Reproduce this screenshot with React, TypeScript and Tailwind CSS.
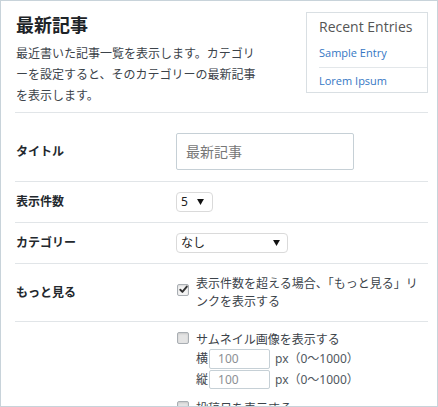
import React from "react";

const FONT = { fontFamily: '"Noto Sans","Noto Sans CJK JP",sans-serif' };

function Check({ checked }: { checked?: boolean }) {
  return (
    <span
      className={
        "relative inline-flex shrink-0 w-[12px] h-[12px] rounded-[2px] border border-[#a9aeb3] " +
        (checked ? "bg-[#f4f4f4]" : "bg-[#e4e4e4]")
      }
      style={{ boxShadow: "inset 0 1px 2px rgba(0,0,0,0.12)" }}
    >
      {checked && (
        <svg viewBox="0 0 12 12" className="absolute left-[0px] top-[-1px] w-[11px] h-[11px]">
          <path d="M2.5 6.3 L4.8 8.6 L9.6 2.8" fill="none" stroke="#333" strokeWidth="2.1" strokeLinecap="round" strokeLinejoin="round" />
        </svg>
      )}
    </span>
  );
}

function Caret() {
  return (
    <svg viewBox="0 0 8 7" className="w-[7px] h-[6px]">
      <path d="M0 0 H8 L4 7 Z" fill="#111" />
    </svg>
  );
}

export default function App() {
  return (
    <div
      className="w-[438px] h-[407px] border border-[#c8d3da] bg-white overflow-hidden text-[#32373c]"
      style={FONT}
    >
      <div className="pl-[14px] pr-[9px]">
        {/* header */}
        <div className="flex items-start h-[112px] border-b border-[#e1e5e8]">
          <div className="w-[246px]">
            <h2 className="mt-[12px] text-[18px] leading-[24px] font-bold text-[#1d2327] pl-[1px]">最新記事</h2>
            <p className="mt-[6px] text-[12px] leading-[21px] text-[#3c434a] pl-[1px]">
              最近書いた記事一覧を表示します。カテゴリーを設定すると、そのカテゴリーの最新記事を表示します。
            </p>
          </div>
          <div className="ml-auto mt-[11px] w-[122px] h-[81px] border border-[#d9dfe3] pl-[12px] overflow-hidden">
            <div className="mt-[4px] text-[14px] leading-[20px] text-[#555]" style={{ fontFamily: '"Open Sans",sans-serif' }}>
              Recent Entries
            </div>
            <ul className="mt-[3px] text-[11px] text-[#3577c4]" style={{ fontFamily: '"Open Sans",sans-serif' }}>
              <li className="h-[28px] flex items-center border-b border-[#e3e7ea]">Sample Entry</li>
              <li className="h-[27px] flex items-center">Lorem Ipsum</li>
            </ul>
          </div>
        </div>

        {/* タイトル */}
        <div className="flex items-center pt-[20px] pb-[11px] border-b border-[#e1e5e8]">
          <div className="w-[161px] pl-[1px] text-[12px] font-bold text-[#23282d]">タイトル</div>
          <div className="w-[178px] h-[37px] border border-[#c6d0d6] rounded-[2px] flex items-center pl-[9px] text-[14px] text-[#777]">
            最新記事
          </div>
        </div>

        {/* 表示件数 */}
        <div className="flex items-center pt-[10px] pb-[10px] border-b border-[#e1e5e8]">
          <div className="w-[161px] pl-[1px] text-[12px] font-bold text-[#23282d]">表示件数</div>
          <div className="w-[37px] h-[20px] border border-[#dadada] rounded-[4px] flex items-center pl-[4px] gap-[9px] text-[12px] text-[#222]">
            <span>5</span>
            <Caret />
          </div>
        </div>

        {/* カテゴリー */}
        <div className="flex items-center pt-[10px] pb-[10px] border-b border-[#e1e5e8]">
          <div className="w-[161px] pl-[1px] text-[12px] font-bold text-[#23282d]">カテゴリー</div>
          <div className="w-[112px] h-[20px] border border-[#dadada] rounded-[4px] flex items-center justify-between pl-[4px] pr-[7px] text-[12px] text-[#222]">
            <span>なし</span>
            <Caret />
          </div>
        </div>

        {/* もっと見る */}
        <div className="flex items-center pt-[11px] pb-[10px] border-b border-[#e1e5e8]">
          <div className="w-[161px] pl-[1px] text-[12px] font-bold text-[#23282d]">もっと見る</div>
          <div className="flex items-start w-[252px]">
            <span className="mt-[3px] ml-[1px]">
              <Check checked />
            </span>
            <span className="ml-[7px] text-[12px] leading-[18px] text-[#3c434a]">
              表示件数を超える場合、「もっと見る」リンクを表示する
            </span>
          </div>
        </div>

        {/* サムネイル */}
        <div className="flex pt-[9px]">
          <div className="w-[161px]" />
          <div className="flex flex-col text-[12px] text-[#3c434a]">
            <div className="flex items-center h-[18px]">
              <span className="ml-[1px]">
                <Check />
              </span>
              <span className="ml-[7px] leading-[18px]">サムネイル画像を表示する</span>
            </div>
            <div className="flex items-center h-[20px] ml-[20px]">
              <span>横</span>
              <span className="ml-[1px] w-[61px] h-[20px] border border-[#c6d0d6] rounded-[2px] flex items-center pl-[8px] text-[#8c8f94]">100</span>
              <span className="ml-[5px] text-[#50575e]">px（0〜1000）</span>
            </div>
            <div className="flex items-center h-[19px] mt-[1px] ml-[20px]">
              <span>縦</span>
              <span className="ml-[1px] w-[61px] h-[19px] border border-[#c6d0d6] rounded-[2px] flex items-center pl-[8px] text-[#8c8f94]">100</span>
              <span className="ml-[5px] text-[#50575e]">px（0〜1000）</span>
            </div>
            <div className="flex items-center h-[18px] mt-[11px]">
              <span className="ml-[1px]">
                <Check />
              </span>
              <span className="ml-[7px] leading-[18px]">投稿日を表示する</span>
            </div>
          </div>
        </div>
      </div>
    </div>
  );
}
